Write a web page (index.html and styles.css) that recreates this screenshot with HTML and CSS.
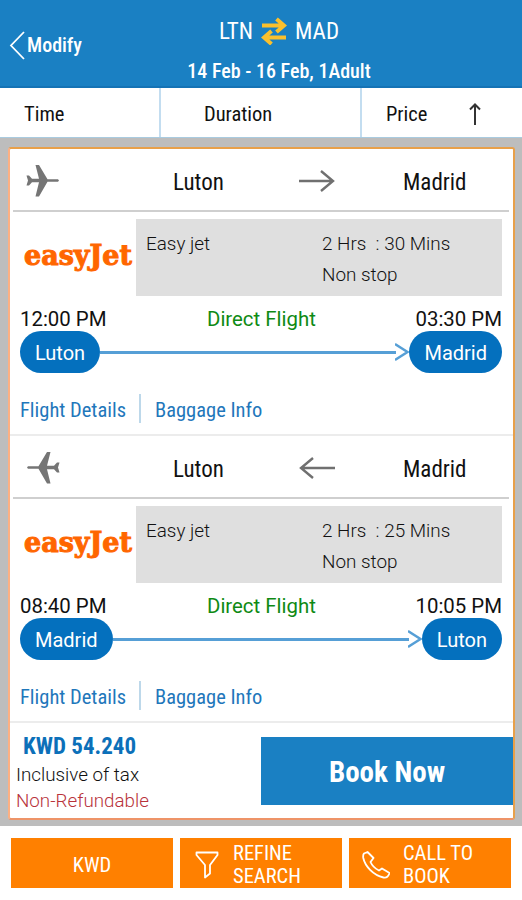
FILE: index.html
```
<!DOCTYPE html>
<html lang="en">
<head>
	<meta charset="utf-8">
	<title>Flights</title>
	<link rel="stylesheet" href="styles.css">
</head>
<body>
	<div class="header">
		<div class="back">
			<svg width="16" height="30" viewBox="0 0 16 30"><path d="M15 2 L2 15.500 L15 29" fill="none" stroke="#fff" stroke-width="1.800"/></svg>
			<span>Modify</span>
		</div>
		<div class="trip">
			<div class="route">
				<span class="from">LTN</span>
				<svg width="26" height="28" viewBox="0 0 26 28"><path d="M1 8.500H22M15.500 2L23 8.500L15.500 15M25 20.500H4M10.500 14L3 20.500L10.500 27" fill="none" stroke="#fbc02d" stroke-width="4"/></svg>
				<span class="to">MAD</span>
			</div>
			<div class="dates">14 Feb - 16 Feb, 1Adult</div>
		</div>
	</div>
	<div class="tabs">
		<div class="tab time">Time</div>
		<div class="tab duration">Duration</div>
		<div class="tab price">
			<span>Price</span>
			<svg width="12" height="22" viewBox="0 0 12 22"><path d="M6 22V2M1 6.500L6 1.500L11 6.500" fill="none" stroke="#333" stroke-width="2"/></svg>
		</div>
	</div>
	<div class="results">
		<div class="card">
			<div class="leg">
				<div class="leg-head">
					<svg class="plane" width="34" height="34" viewBox="0 0 34 34"><path d="M33 16.500L32 15.200H21.500L13 1H9.500L13 14.800H6L3 11.500H0.500L2 16.500L0.500 21.500H3L6 18.200H13L9.500 32.500H13L21.500 17.800H32Z" fill="#757575"/></svg>
					<span class="city">Luton</span>
					<svg class="arrow" width="36" height="22" viewBox="0 0 36 22"><path d="M0 11H34M22 1L34 11L22 21" fill="none" stroke="#707070" stroke-width="2.400"/></svg>
					<span class="city">Madrid</span>
				</div>
				<div class="info">
					<div class="logo">easyJet</div>
					<div class="info-box">
						<div class="airline">Easy jet</div>
						<div class="length">2 Hrs&nbsp; : 30 Mins<br>Non stop</div>
					</div>
				</div>
				<div class="times">
					<span>12:00 PM</span>
					<span class="direct">Direct Flight</span>
					<span class="end">03:30 PM</span>
				</div>
				<div class="path">
					<span class="pill">Luton</span>
					<span class="line"></span>
					<svg width="14" height="18" viewBox="0 0 14 18"><path d="M0 1L12.500 9L0 17" fill="none" stroke="#569fd6" stroke-width="2.400"/></svg>
					<span class="pill">Madrid</span>
				</div>
				<div class="links">
					<span class="details">Flight Details</span>
					<span class="baggage">Baggage Info</span>
				</div>
			</div>
			<div class="leg">
				<div class="leg-head">
					<svg class="plane back-way" width="34" height="34" viewBox="0 0 34 34"><path d="M33 16.500L32 15.200H21.500L13 1H9.500L13 14.800H6L3 11.500H0.500L2 16.500L0.500 21.500H3L6 18.200H13L9.500 32.500H13L21.500 17.800H32Z" fill="#757575"/></svg>
					<span class="city">Luton</span>
					<svg class="arrow back-way" width="36" height="22" viewBox="0 0 36 22"><path d="M0 11H34M22 1L34 11L22 21" fill="none" stroke="#707070" stroke-width="2.400"/></svg>
					<span class="city">Madrid</span>
				</div>
				<div class="info">
					<div class="logo">easyJet</div>
					<div class="info-box">
						<div class="airline">Easy jet</div>
						<div class="length">2 Hrs&nbsp; : 25 Mins<br>Non stop</div>
					</div>
				</div>
				<div class="times">
					<span>08:40 PM</span>
					<span class="direct">Direct Flight</span>
					<span class="end">10:05 PM</span>
				</div>
				<div class="path">
					<span class="pill">Madrid</span>
					<span class="line"></span>
					<svg width="14" height="18" viewBox="0 0 14 18"><path d="M0 1L12.500 9L0 17" fill="none" stroke="#569fd6" stroke-width="2.400"/></svg>
					<span class="pill">Luton</span>
				</div>
				<div class="links">
					<span class="details">Flight Details</span>
					<span class="baggage">Baggage Info</span>
				</div>
			</div>
			<div class="total">
				<div class="cost">
					<div class="amount">KWD 54.240</div>
					<div class="tax">Inclusive of tax</div>
					<div class="refund">Non-Refundable</div>
				</div>
				<div class="book">Book Now</div>
			</div>
		</div>
	</div>
	<div class="footer">
		<div class="button currency">KWD</div>
		<div class="button">
			<svg width="24" height="28" viewBox="0 0 24 28"><path d="M1.500 1.500H22.500V4L15 14V22.500L10 26.500V14L1.500 4Z" fill="none" stroke="#fff" stroke-width="1.800" stroke-linejoin="round"/></svg>
			<span>REFINE<br>SEARCH</span>
		</div>
		<div class="button call">
			<svg width="28" height="28" viewBox="0 0 28 28"><path d="M2 2.500L5.500 1L11.500 7L8.500 11C10 14.500 13 17.500 17 19.500L20 17.500L27.500 22C26.500 25.500 24 27 21.500 26.500C11 24 3 15 1.300 7C1 5 1 3.500 2 2.500Z" fill="none" stroke="#fff" stroke-width="1.800" stroke-linejoin="round"/></svg>
			<span>CALL TO<br>BOOK</span>
		</div>
	</div>
</body>
</html>
```
FILE: styles.css
```
* {
	box-sizing: border-box;
}
body {
	margin: 0;
	height: 900px;
	font-family: "Roboto Condensed", Roboto, sans-serif;
	font-size: 21px;
	color: #111;
	background-color: #fff;
	white-space: nowrap;
}
svg {
	display: block;
	flex: none;
}

/* Top bar */
.header {
	display: grid;
	grid-template-columns: 157px 244px 1fr;
	height: 88px;
	background-color: #1a80c3;
	border-bottom: 2px solid #1573b5;
	color: #fff;
}
.back {
	display: flex;
	align-items: center;
	gap: 2px;
	padding: 3px 0 0 9px;
	font-weight: 500;
	font-size: 20px;
}
.trip {
	text-align: center;
}
.route {
	display: flex;
	justify-content: center;
	align-items: center;
	gap: 8px;
	height: 28px;
	margin-top: 17px;
	font-size: 23px;
}
.dates {
	margin-top: 13px;
	line-height: 26px;
	font-size: 20px;
	font-weight: 500;
}

.tabs {
	display: grid;
	grid-template-columns: 161px 201px 1fr;
	height: 50px;
	border-bottom: 1px solid #a9cbe0;
}
.tab {
	display: flex;
	align-items: center;
	padding-left: 24px;
	border-right: 2px solid #c3ddf0;
	padding-top: 2px;
	font-size: 20.5px;
}
.tab.duration {
	padding-left: 43px;
}
.tab.price {
	gap: 42px;
	border: none;
}

/* Results */
.results {
	height: 688px;
	padding: 9px 7px 6px 8px;
	background-color: #bdbdbd;
}
.card {
	height: 673px;
	border: 2px solid #e8a04a;
	border-left-color: #fdb083;
	border-bottom-color: #ee9468;
	border-radius: 3px;
	background-color: #fff;
}
.leg {
	height: 287px;
	border-bottom: 2px solid #ececec;
}
.leg-head {
	display: grid;
	grid-template-columns: 147px 126px 104px 1fr;
	align-items: center;
	height: 63px;
	margin: 0 4px 0 3px;
	padding: 2px 0 0 13px;
	border-bottom: 2px solid #cfcfcf;
	font-size: 23px;
}
.city {
	padding-top: 3px;
}
.back-way {
	transform: scaleX(-1);
}
.info {
	display: flex;
	margin-top: 7px;
	height: 77px;
}
.logo {
	width: 126px;
	padding-left: 14px;
	line-height: 74px;
	font-family: "DejaVu Serif", serif;
	font-weight: bold;
	font-size: 27px;
	color: #ff6600;
	-webkit-text-stroke: 1px #ff6600;
}
.info-box {
	display: grid;
	grid-template-columns: 176px 1fr;
	width: 366px;
	padding: 9px 0 0 10px;
	line-height: 31px;
	font-family: Roboto, sans-serif;
	font-size: 18.9px;
	font-weight: 300;
	background-color: #dfdfdf;
}
.times {
	display: grid;
	grid-template-columns: 187px 1fr 1fr;
	height: 35px;
	padding: 7px 11px 0 10px;
	line-height: 32px;
	font-family: Roboto, sans-serif;
	font-size: 20.4px;
}
.end {
	text-align: right;
}
.direct {
	color: #0f8a14;
}
.path {
	display: flex;
	align-items: center;
	height: 42px;
	padding: 0 11px 0 10px;
}
.pill {
	height: 42px;
	padding: 0 15px;
	line-height: 44px;
	border-radius: 21px;
	font-family: Roboto, sans-serif;
	font-size: 20px;
	color: #fff;
	background-color: #0470be;
}
.line {
	flex: 1;
	height: 3px;
	margin-right: -1px;
	background-color: #569fd6;
}
.links {
	display: flex;
	margin: 21px 0 0 10px;
	line-height: 32px;
	font-size: 20.5px;
	color: #1f77bb;
}
.details {
	width: 121px;
	height: 29px;
	border-right: 2px solid #bdd8ea;
}
.baggage {
	padding-left: 14px;
}

.total {
	display: flex;
	justify-content: space-between;
}
.cost {
	padding: 8px 0 0 6px;
	font-family: Roboto, sans-serif;
	font-size: 18.8px;
	font-weight: 300;
	line-height: 26px;
}
.amount {
	padding-left: 7px;
	line-height: 31px;
	font-family: "Roboto Condensed", Roboto, sans-serif;
	font-size: 23px;
	font-weight: bold;
	color: #0c70b9;
}
.refund {
	color: #b8323a;
}
.book {
	width: 252px;
	height: 68px;
	margin-top: 14px;
	line-height: 70px;
	text-align: center;
	font-size: 29px;
	font-weight: bold;
	color: #fff;
	background-color: #1a80c3;
}

/* Bottom buttons */
.footer {
	display: flex;
	gap: 7px;
	padding: 12px 11px 0;
}
.button {
	display: flex;
	align-items: center;
	width: 162px;
	height: 50px;
	gap: 14px;
	padding: 4px 0 0 15px;
	line-height: 23px;
	font-size: 20.5px;
	color: #fff;
	background-color: #ff8000;
}
.button.call {
	padding-left: 13px;
	gap: 13px;
}
.button.currency {
	justify-content: center;
	padding-left: 0;
}
```
